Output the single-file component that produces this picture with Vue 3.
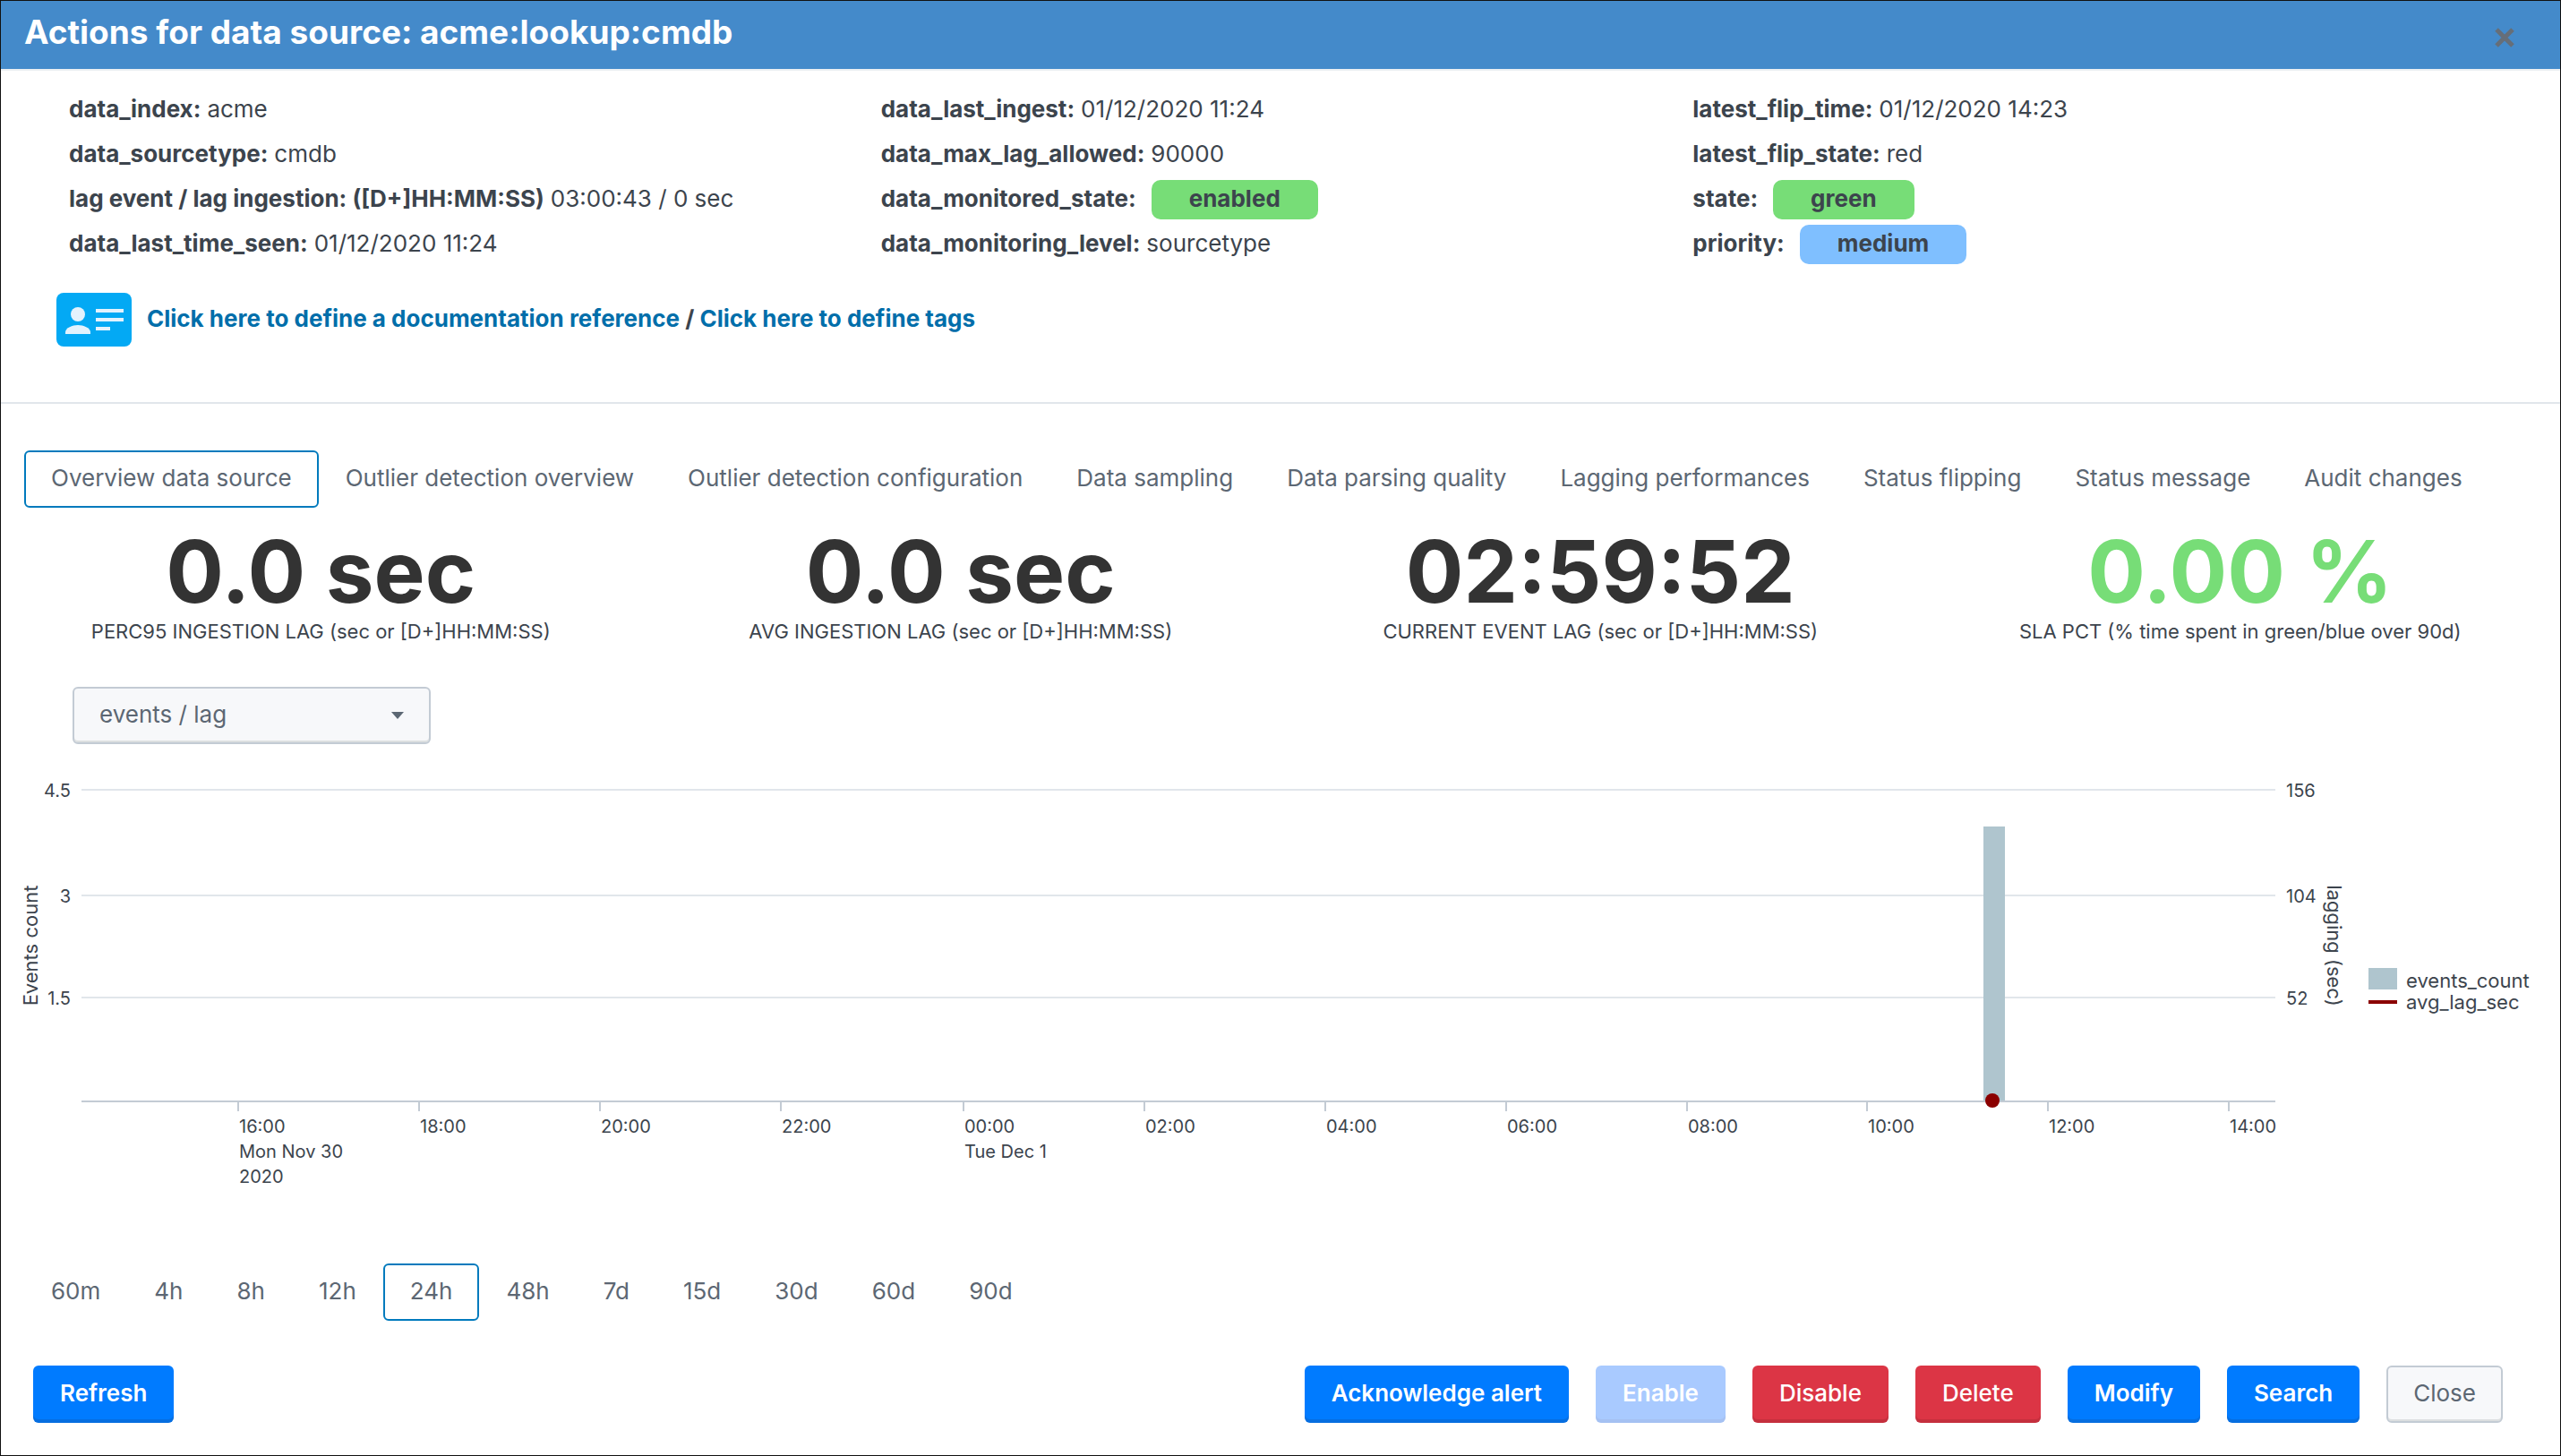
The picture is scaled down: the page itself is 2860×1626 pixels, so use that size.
<script setup>
import { ref } from 'vue'

const details = [
  [
    { key: 'data_index:', value: 'acme' },
    { key: 'data_sourcetype:', value: 'cmdb' },
    { key: 'lag event / lag ingestion: ([D+]HH:MM:SS)', value: '03:00:43 / 0 sec' },
    { key: 'data_last_time_seen:', value: '01/12/2020 11:24' },
  ],
  [
    { key: 'data_last_ingest:', value: '01/12/2020 11:24' },
    { key: 'data_max_lag_allowed:', value: '90000' },
    { key: 'data_monitored_state:', value: 'enabled', badge: 'green' },
    { key: 'data_monitoring_level:', value: 'sourcetype' },
  ],
  [
    { key: 'latest_flip_time:', value: '01/12/2020 14:23' },
    { key: 'latest_flip_state:', value: 'red' },
    { key: 'state:', value: 'green', badge: 'green' },
    { key: 'priority:', value: 'medium', badge: 'blue' },
  ],
]

const tabs = [
  'Overview data source',
  'Outlier detection overview',
  'Outlier detection configuration',
  'Data sampling',
  'Data parsing quality',
  'Lagging performances',
  'Status flipping',
  'Status message',
  'Audit changes',
]
const activeTab = ref(tabs[0])

const kpis = [
  { value: '0.0 sec', label: 'PERC95 INGESTION LAG (sec or [D+]HH:MM:SS)' },
  { value: '0.0 sec', label: 'AVG INGESTION LAG (sec or [D+]HH:MM:SS)' },
  { value: '02:59:52', label: 'CURRENT EVENT LAG (sec or [D+]HH:MM:SS)' },
  { value: '0.00 %', label: 'SLA PCT (% time spent in green/blue over 90d)', good: true },
]

const gridLines = [
  { y: 51, left: '4.5', right: '156' },
  { y: 169, left: '3', right: '104' },
  { y: 283, left: '1.5', right: '52' },
]

const ticks = [
  { x: 265, lines: ['16:00', 'Mon Nov 30', '2020'] },
  { x: 467, lines: ['18:00'] },
  { x: 669, lines: ['20:00'] },
  { x: 871, lines: ['22:00'] },
  { x: 1075, lines: ['00:00', 'Tue Dec 1'] },
  { x: 1277, lines: ['02:00'] },
  { x: 1479, lines: ['04:00'] },
  { x: 1681, lines: ['06:00'] },
  { x: 1883, lines: ['08:00'] },
  { x: 2084, lines: ['10:00'] },
  { x: 2286, lines: ['12:00'] },
  { x: 2488, lines: ['14:00'] },
]

const ranges = ['60m', '4h', '8h', '12h', '24h', '48h', '7d', '15d', '30d', '60d', '90d']
const activeRange = ref('24h')
const metric = ref('events / lag')
</script>

<template>
  <main class="modal">
    <header class="head">
      <h1>Actions for data source: acme:lookup:cmdb</h1>
      <button class="dismiss" type="button" aria-label="Close dialog">
        <svg width="24" height="24" viewBox="0 0 24 24">
          <path d="M3 3L21 21M21 3L3 21" stroke="#666e78" stroke-width="5" />
        </svg>
      </button>
    </header>

    <section class="summary">
      <div class="details">
        <div v-for="(col, i) in details" :key="i">
          <div v-for="item in col" :key="item.key" class="row">
            <b>{{ item.key }}</b>
            <span v-if="item.badge" class="badge" :class="item.badge">{{ item.value }}</span>
            <span v-else>{{ item.value }}</span>
          </div>
        </div>
      </div>
      <div class="links">
        <svg width="84" height="60" viewBox="0 0 84 60">
          <rect width="84" height="60" rx="8" fill="#03a9f4" />
          <g fill="#e3f2fd">
            <circle cx="24" cy="24" r="8" />
            <path d="M10 46v-2c0-5 8-8 14-8s14 3 14 8v2z" />
            <rect x="44" y="18" width="31" height="4" />
            <rect x="44" y="28" width="31" height="4" />
            <rect x="44" y="38" width="16" height="4" />
          </g>
        </svg>
        <p>
          <a href="#">Click here to define a documentation reference</a> /
          <a href="#">Click here to define tags</a>
        </p>
      </div>
    </section>

    <nav class="tabs">
      <button
        v-for="tab in tabs"
        :key="tab"
        type="button"
        class="pill"
        :class="{ active: tab === activeTab }"
        @click="activeTab = tab"
      >{{ tab }}</button>
    </nav>

    <section class="kpis">
      <div v-for="kpi in kpis" :key="kpi.label" class="kpi">
        <div class="number" :class="{ good: kpi.good }">{{ kpi.value }}</div>
        <div class="caption">{{ kpi.label }}</div>
      </div>
    </section>

    <div class="picker">
      <select v-model="metric" aria-label="Chart metric">
        <option>events / lag</option>
      </select>
      <svg class="caret" width="14" height="8" viewBox="0 0 14 8"><path d="M0 0h14L7 8z" fill="#5c6773" /></svg>
    </div>

    <svg class="chart" viewBox="0 0 2858 540" role="img" aria-label="Events count and lagging over time">
      <g v-for="line in gridLines" :key="line.y">
        <path :d="`M90 ${line.y}H2540`" stroke="#e1e6eb" stroke-width="2" />
        <text x="78" :y="line.y + 8" text-anchor="end">{{ line.left }}</text>
        <text x="2552" :y="line.y + 8">{{ line.right }}</text>
      </g>
      <rect x="2214" y="92" width="24" height="307" fill="#afc5ce" />
      <path d="M90 399H2540" stroke="#c3cbd4" stroke-width="2" />
      <g v-for="tick in ticks" :key="tick.x">
        <path :d="`M${tick.x} 400v10`" stroke="#c3cbd4" stroke-width="2" />
        <text v-for="(line, n) in tick.lines" :key="line" :x="tick.x + 1" :y="434 + n * 28">{{ line }}</text>
      </g>
      <circle cx="2224" cy="398" r="8" fill="#8b0000" />
      <g class="titles">
        <text transform="translate(41 225) rotate(-90)" text-anchor="middle">Events count</text>
        <text transform="translate(2598 225) rotate(90)" text-anchor="middle">lagging (sec)</text>
        <rect x="2644" y="250" width="32" height="24" fill="#afc5ce" />
        <rect x="2644" y="286" width="32" height="4" fill="#8b0000" />
        <text x="2686" y="272">events_count</text>
        <text x="2686" y="296">avg_lag_sec</text>
      </g>
    </svg>

    <nav class="ranges">
      <button
        v-for="range in ranges"
        :key="range"
        type="button"
        class="pill"
        :class="{ active: range === activeRange }"
        @click="activeRange = range"
      >{{ range }}</button>
    </nav>

    <footer class="foot">
      <button type="button" class="btn primary">Refresh</button>
      <div class="actions">
        <button type="button" class="btn primary">Acknowledge alert</button>
        <button type="button" class="btn primary" disabled>Enable</button>
        <button type="button" class="btn danger">Disable</button>
        <button type="button" class="btn danger">Delete</button>
        <button type="button" class="btn primary">Modify</button>
        <button type="button" class="btn primary">Search</button>
        <button type="button" class="btn plain">Close</button>
      </div>
    </footer>
  </main>
</template>

<style>
body {
  margin: 0;
  background: #fff;
}
</style>

<style scoped>
* {
  box-sizing: border-box;
}
.modal {
  min-height: 100vh;
  border: 1px solid #111;
  background: #fff;
  color: #3c444d;
  font: 26px Inter, 'Liberation Sans', sans-serif;
}
.head {
  display: flex;
  justify-content: space-between;
  align-items: flex-start;
  height: 78px;
  padding: 13px 50px 0 26px;
  background: #448aca;
  border-bottom: 2px solid #eceff2;
}
h1 {
  margin: 0;
  color: #fff;
  font-size: 37px;
  font-weight: 700;
  line-height: 44px;
}
button,
select {
  font: inherit;
  white-space: nowrap;
}
.dismiss {
  display: flex;
  padding: 16px 0 0;
  border: 0;
  background: none;
}
.summary {
  padding: 18px 62px 62px;
  border-bottom: 2px solid #e1e6eb;
}
.details {
  display: grid;
  grid-template-columns: repeat(3, 1fr);
  padding-left: 14px;
}
.row {
  display: flex;
  gap: 7px;
  height: 50px;
  line-height: 50px;
  white-space: nowrap;
}
.badge {
  height: 44px;
  margin: 4px 0 0 10px;
  padding: 0 42px;
  border-radius: 10px;
  font-weight: 700;
  line-height: 42px;
}
.badge.green {
  background: #77dd77;
}
.badge.blue {
  background: #7fbfff;
}
.links {
  display: flex;
  align-items: center;
  gap: 17px;
  margin-top: 30px;
}
.links p {
  margin: 0;
  padding-bottom: 3px;
  font-weight: 700;
}
a {
  color: #006eaa;
  text-decoration: none;
}
.tabs,
.ranges {
  display: flex;
  padding-left: 26px;
}
.tabs {
  margin-top: 52px;
}
.pill {
  height: 64px;
  padding: 0 28px 3px;
  border: 2px solid transparent;
  border-radius: 6px;
  background: none;
  color: #5c6773;
}
.pill.active {
  border-color: #007abd;
}
.kpis {
  display: grid;
  grid-template-columns: repeat(4, 1fr);
  margin-top: 19px;
  text-align: center;
}
.number {
  color: #333;
  font-size: 96px;
  font-weight: 700;
  line-height: 104px;
}
.number.good {
  color: #77dd77;
}
.caption {
  font-size: 22px;
  line-height: 30px;
}
.picker {
  position: relative;
  width: 400px;
  margin: 47px 0 0 80px;
}
select {
  display: block;
  width: 100%;
  height: 64px;
  padding: 0 28px 3px;
  appearance: none;
  border: 2px solid #c3cbd4;
  border-radius: 6px;
  background: #f7f8fa;
  box-shadow: inset 0 -2px #dcdfe0;
  color: #5c6773;
}
.caret {
  position: absolute;
  top: 28px;
  right: 30px;
  pointer-events: none;
}
.chart {
  display: block;
  width: 100%;
}
.chart text {
  fill: #3c444d;
  font-size: 20px;
}
.chart .titles text {
  font-size: 22px;
}
.ranges {
  margin-top: 40px;
}
.foot {
  display: flex;
  justify-content: space-between;
  padding: 50px 64px 35px 36px;
}
.actions {
  display: flex;
  gap: 30px;
}
.btn {
  height: 64px;
  padding: 0 30px 3px;
  border: 0;
  border-radius: 6px;
  color: #fff;
  font-weight: 600;
  box-shadow: inset 0 -4px rgba(30, 60, 100, 0.2);
}
.primary {
  background: #007bff;
}
.primary:disabled {
  background: #a9caff;
  box-shadow: inset 0 -4px rgba(150, 160, 190, 0.2);
}
.danger {
  background: #dc3545;
  font-weight: 500;
  box-shadow: inset 0 -4px rgba(0, 0, 0, 0.1);
}
.plain {
  padding: 0 28px 3px;
  border: 2px solid #c3cbd4;
  background: #f7f8fa;
  box-shadow: inset 0 -2px #dcdfe0;
  color: #5c6773;
  font-weight: 400;
}
</style>
